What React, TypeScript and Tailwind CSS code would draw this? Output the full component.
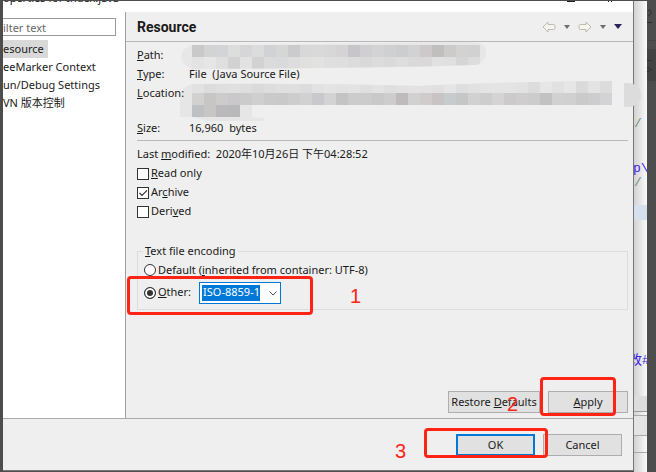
import type { ReactNode } from "react";

const CELL = 12;

const pathCells = [
  ["#c9c9ca", "#d3d3d3", "#d3d4d7", "#dddedb", "#d6d6d9", "#dcdcdc", "#d0d2d5", "#d6d6d4", "#cbcbcd", "#d8d8d8", "#d9d9d9", "#d7d7d7", "#d4d4d4", "#c7c5c9", "#cfcfd1", "#d3d3d3", "#d0d0d0", "#cbcdce", "#d2d2d2", "#cdc9ca", "#bfbfbf", "#cccbca", "#d2d2d2", "#d1d1d2"],
  ["#e3e3e3", "#e6e6e6", "#dfdfdf", "#d2d2d2", "#e2e2e2", "#d2d2d3", "#dbdbdb", "#d9dadc", "#dddddd", "#e0e0de", "#e2e2e2", "#dfdfdf", "#dedede", "#dcdcdc", "#d9d9d9", "#dcdcdc", "#dadada", "#dddddd", "#d9d9d9", "#dad8d8", "#e1e1e1", "#dfdfdf", "#d5d5d6", "#dcdcdc"],
];

const locationCells = [
  ["#e2e2e2", "#dcdcdc", "#dfdfdf", "#e0e0e0", "#dedede", "#dadada", "#dddddd", "#dfdfdf", "#dfdfdf", "#dcdcdc", "#e2e2e2", "#e4e4e4", "#e2e2e2", "#e3e3e3", "#dfdfdf", "#e3e3e3", "#dfdfdf", "#e1e1e1", "#e3e3e3", "#e2e2e2", "#e0e0e0", "#e5e5e5", "#dedede", "#e1e1e1", "#e3e3e3", "#e4e4e4", "#e4e4e4", "#e2e2e2", "#dcdcdc", "#e6e6e6", "#e1e1e1", "#e6e6e6", "#dadada", "#e3e3e3", "#dcdcdc"],
  ["#d1d1d1", "#c8c6c5", "#cccccc", "#cac8ca", "#cbcbcb", "#cfcfcf", "#cacaca", "#c9c9c9", "#cdcdcd", "#d1d1d1", "#c9c8cc", "#d3d3d3", "#c4c4c5", "#cccccc", "#cccccc", "#c9c9c9", "#cdcdcd", "#bfbbbd", "#d1d1d1", "#cfcccb", "#c8c4c3", "#c6cbce", "#c6c6c6", "#d1d1d1", "#cdcdcd", "#d4d4d4", "#cdcacc", "#cecece", "#cccccc", "#c2c2c2", "#d1d1d1", "#d0d0d0", "#cacaca", "#cdcdcd", "#d3d2d5"],
  ["#bec0c2", "#c8c6c5", "#bab9bb", "#b9b9ba"],
];

function Mosaic({ rows, offset }: { rows: string[][]; offset: number }) {
  return (
    <>
      {rows.map((row, y) =>
        row.map((fill, x) => (
          <rect key={`${y}-${x}`} x={12 + x * CELL} y={offset + y * CELL} width={CELL} height={CELL} fill={fill} />
        ))
      )}
    </>
  );
}

function NavArrow({ flip = false }: { flip?: boolean }) {
  return (
    <svg width="14" height="12" viewBox="0 0 14 12" className={flip ? "-scale-x-100" : ""}>
      <path d="M1 6 6 1v2.5h5.5q1.5 0 1.5 1.5v2q0 1.500-1.500 1.500H6V11z" fill="#f6f6ee" stroke="#bcbbb2" strokeLinejoin="round" />
    </svg>
  );
}

function Caret({ wide = false }: { wide?: boolean }) {
  return wide ? (
    <svg width="8" height="5" viewBox="0 0 8 5">
      <path d="M0 0h8L4 5z" fill="#2b2357" />
    </svg>
  ) : (
    <svg width="6" height="4" viewBox="0 0 6 4">
      <path d="M0 0h6L3 4z" fill="#6e6e6e" />
    </svg>
  );
}

function Field({ label, children }: { label: ReactNode; children?: ReactNode }) {
  return (
    <div className="flex h-[19px] items-center">
      <dt className="w-[52px]">{label}</dt>
      <dd className="whitespace-pre">{children}</dd>
    </div>
  );
}

function CheckRow({ id, checked = false, children }: { id: string; checked?: boolean; children: ReactNode }) {
  return (
    <div className="flex h-[19px] items-center gap-[2px]">
      <input
        id={id}
        type="checkbox"
        defaultChecked={checked}
        className="peer size-3 appearance-none border border-[#333] bg-white"
      />
      <svg viewBox="0 0 12 12" className="pointer-events-none invisible -ml-[14px] size-3 peer-checked:visible">
        <path d="M2.5 6 5 8.5 10 3.3" fill="none" stroke="#333" strokeWidth="1.2" />
      </svg>
      <label htmlFor={id}>{children}</label>
    </div>
  );
}

const buttonClass = "h-[22px] bg-[#e1e1e1] text-center whitespace-nowrap";
const grayBorder = "border border-[#adadad]";
const noteClass = "pointer-events-none absolute rounded-[4px] border-3 border-[#ff2314]";
const noteTextClass = "pointer-events-none absolute font-['Liberation_Sans',sans-serif] text-xl leading-5 text-[#ff2314]";

function Sidebar() {
  return (
    <nav className="w-[123px] shrink-0 overflow-hidden border-r border-[#a0a0a0] bg-white pt-[6px] whitespace-nowrap">
      <input
        aria-label="Filter"
        placeholder="ilter text"
        className="block h-[18px] w-[113px] border border-l-0 border-[#999] px-0 placeholder:text-[#666]"
      />
      <ul className="mt-1 leading-[18px]">
        <li className="flex"><a href="#resource" className="bg-[#d9d9d9] pr-1">esource</a></li>
        <li className="flex"><a href="#freemarker">eeMarker Context</a></li>
        <li className="flex"><a href="#run">un/Debug Settings</a></li>
        <li className="flex"><a href="#svn">VN 版本控制</a></li>
      </ul>
    </nav>
  );
}

function ResourceDetails() {
  return (
    <section className="relative mr-[5px] ml-[11px] pt-1">
      <dl className="relative z-10">
        <Field label={<><u>P</u>ath:</>} />
        <Field label={<><u>T</u>ype:</>}>File  (Java Source File)</Field>
        <Field label={<><u>L</u>ocation:</>} />
        <div className="h-4" />
        <Field label={<><u>S</u>ize:</>}>16,960  bytes</Field>
      </dl>
      <div className="mt-[2px] border-t border-[#b8b8b8]" />
      <p className="mt-[3px] h-5 leading-[19px] whitespace-pre">Last <u>m</u>odified:  2020年10月26日 下午04:28:52</p>
      <CheckRow id="readonly"><u>R</u>ead only</CheckRow>
      <CheckRow id="archive" checked>Ar<u>c</u>hive</CheckRow>
      <CheckRow id="derived">Deri<u>v</u>ed</CheckRow>
      <svg width="462" height="82" viewBox="0 0 462 82" className="pointer-events-none absolute -top-px left-[43px]">
        <clipPath id="path-smear">
          <path d="M12 4Q120 4 250 1H294Q306 2 306 12Q304 24 294 24Q200 27 14 28Q2 26 1 16Q2 7 12 4z" />
        </clipPath>
        <g clipPath="url(#path-smear)">
          <rect width="310" height="30" fill="#e7e7e8" />
          <Mosaic rows={pathCells} offset={4} />
        </g>
        <clipPath id="location-smear">
          <path d="M12 43Q120 42 240 45Q350 40 432 40V64H72V76L84 77V80H30L12 76H0V62Q-2 47 12 43z" />
        </clipPath>
        <g clipPath="url(#location-smear)">
          <rect width="440" height="82" fill="#e6e6e6" />
          <Mosaic rows={locationCells} offset={40} />
        </g>
        <path d="M444 42h5q12 2 12 12t-12 12h-5z" fill="#dcdcdc" />
      </svg>
    </section>
  );
}

function Encoding() {
  return (
    <div className="relative mt-[21px] mr-[5px] ml-[11px]">
      <fieldset className="h-[68px] border border-[#dcdcdc] pl-[6px]">
        <legend className="-ml-px h-[18px] px-[2px] leading-[18px]"><u>T</u>ext file encoding</legend>
        <div className="flex h-5 items-center gap-[2px]">
          <input id="default" type="radio" name="encoding" className="size-3 appearance-none rounded-full border border-[#333] bg-white" />
          <label htmlFor="default">Default (<u>i</u>nherited from container: UTF-8)</label>
        </div>
        <div className="flex h-[25px] items-center gap-[2px]">
          <input
            id="other"
            type="radio"
            name="encoding"
            defaultChecked
            className="size-3 appearance-none rounded-full border border-[#333] bg-[#333] ring-2 ring-white ring-inset"
          />
          <label htmlFor="other"><u>O</u>ther:</label>
          <div className="relative ml-[6px]">
            <select
              aria-label="Encoding"
              className="block h-[22px] w-[82px] appearance-none border border-[#0078d7] bg-white bg-linear-to-r from-[#0078d7] to-[#0078d7] bg-size-[58px_16px] bg-position-[2px_2px] bg-no-repeat pl-[3px] text-white"
            >
              <option>ISO-8859-1</option>
            </select>
            <svg width="8" height="5" viewBox="0 0 8 5" className="pointer-events-none absolute top-[9px] right-[4px]">
              <path d="M.5.5 4 4 7.5.5" fill="none" stroke="#555" />
            </svg>
          </div>
        </div>
      </fieldset>
      <div className={`${noteClass} top-[34px] -left-[10px] h-[39px] w-[186px]`} />
      <span className={`${noteTextClass} top-[44px] left-[213px]`}>1</span>
    </div>
  );
}

function Backdrop() {
  return (
    <div className="w-[13px] shrink-0 overflow-hidden bg-linear-to-r from-[#d2d2d2] to-[#fafafa] font-['Liberation_Mono','Noto_Sans_CJK_SC',monospace] text-[13px] leading-5 text-[#3a22e8]">
      <div className="mt-[113px] text-[#6f8f78]">/</div>
      <div className="mt-[25px] -ml-px">p\</div>
      <div className="-mt-[6px] text-[#6f8f78]">/</div>
      <div className="mt-[12px] h-[15px] bg-[#d5dfee]" />
      <div className="mt-[131px] -ml-[5px] whitespace-nowrap">改#</div>
      <div className="mt-[25px] h-[16px] border-b border-[#999] bg-[#ddd]" />
      <div className="mt-[3px] h-[21px] border-y border-[#aaa] bg-[#e4e4e4]" />
      <div className="h-[17px] border-b border-[#aaa]" />
    </div>
  );
}

function ToolStrip() {
  return (
    <div className="w-[9px] shrink-0 pt-2">
      <svg width="9" height="72" viewBox="0 0 9 72" fill="none" stroke="#2e2e2e">
        <path d="M0 31.500h9" stroke="#464646" />
        <path d="M0 40h9v32H0z" fill="#424242" stroke="none" />
        <path d="M1 2q2-2 3 0t-1 4l-2 1M0 13.500h5M0 51.500h5M3 60.500h2" />
        <circle cx="1" cy="60.500" r="2" />
      </svg>
    </div>
  );
}

export default function App() {
  return (
    <div className="flex min-h-screen bg-[#4d4d4d] pt-px pl-[3px] font-['Noto_Sans','Noto_Sans_CJK_SC',sans-serif] text-[11px] text-[#1a1a1a]">
      <div className="mb-px flex min-w-0 flex-1 flex-col border-r border-b border-[#777] bg-[#efefef]">
        <header className="flex h-[11px] items-start overflow-hidden bg-white pr-[21px]">
          <h1 className="-mt-[11px] flex-1 text-[11px] leading-4 whitespace-pre">operties for Index.java</h1>
          <svg width="45" height="1" viewBox="0 0 45 1">
            <path d="M0 0h8v1H0zM41 0h1v1h-1zM44 0h1v1h-1z" fill="#222" />
          </svg>
        </header>
        <div className="flex flex-1 border-b border-[#aaa]">
          <Sidebar />
          <main className="flex min-w-0 flex-1 flex-col">
            <div className="flex h-[30px] items-center border-b border-[#b8b8b8] pr-[11px] pl-[11px]">
              <h2 className="flex-1 font-[Roboto,sans-serif] text-sm font-bold">Resource</h2>
              <div className="flex items-center gap-2">
                <button aria-label="Back"><NavArrow /></button>
                <button aria-label="Back history"><Caret /></button>
                <button aria-label="Forward"><NavArrow flip /></button>
                <button aria-label="Forward history"><Caret /></button>
                <button aria-label="Menu"><Caret wide /></button>
              </div>
            </div>
            <ResourceDetails />
            <Encoding />
            <div className="relative mt-auto mr-[5px] mb-[5px] flex justify-end gap-2">
              <button className={`${buttonClass} ${grayBorder} w-[92px]`}>Restore <u>D</u>efaults</button>
              <button className={`${buttonClass} ${grayBorder} w-20`}><u>A</u>pply</button>
              <div className={`${noteClass} right-[12px] -bottom-[3px] h-[39px] w-[76px]`} />
              <span className={`${noteTextClass} right-[110px] -bottom-px`}>2</span>
            </div>
          </main>
        </div>
        <footer className="relative flex h-[51px] justify-end gap-2 pt-[15px] pr-[11px]">
          <button className={`${buttonClass} w-[79px] border-2 border-[#0078d7]`}>OK</button>
          <button className={`${buttonClass} ${grayBorder} w-[79px]`}>Cancel</button>
          <div className={`${noteClass} top-[9px] right-[85px] h-[30px] w-[124px]`} />
          <span className={`${noteTextClass} top-[22px] right-[227px]`}>3</span>
        </footer>
      </div>
      <Backdrop />
      <ToolStrip />
    </div>
  );
}
